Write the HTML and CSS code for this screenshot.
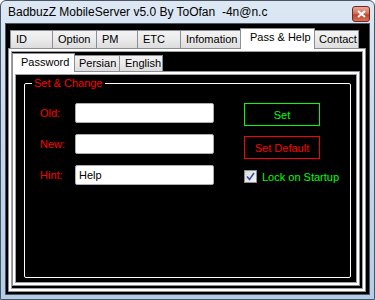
FILE: index.html
```html
<!DOCTYPE html>
<html lang="en">
<head>
    <meta charset="UTF-8">
    <title>BadbuzZ MobileServer v5.0</title>
    <link rel="stylesheet" href="styles.css">
</head>
<body>
    <div class="window">
        <div class="titlebar">
            <span class="title">BadbuzZ MobileServer v5.0 By ToOfan&nbsp; -4n@n.c</span>
            <div class="close-btn">
                <svg width="9" height="8" viewBox="0 0 9 8">
                    <path d="M1 1 L8 7 M8 1 L1 7" stroke="#fff" stroke-width="2"/>
                </svg>
            </div>
        </div>

        <div class="client">
            <div class="tabs outer-tabs">
                <div class="tab">ID</div>
                <div class="tab">Option</div>
                <div class="tab">PM</div>
                <div class="tab">ETC</div>
                <div class="tab">Infomation</div>
                <div class="tab active">Pass &amp; Help</div>
                <div class="tab">Contact</div>
            </div>

            <div class="panel outer-panel">
                <div class="tabs inner-tabs">
                    <div class="tab active">Password</div>
                    <div class="tab">Persian</div>
                    <div class="tab">English</div>
                </div>

                <div class="panel inner-panel">
                    <fieldset class="group">
                        <legend>Set &amp; Change</legend>
                        <div class="group-body">
                            <div class="fields">
                                <div class="field">
                                    <label>Old:</label>
                                    <div class="input"></div>
                                </div>
                                <div class="field">
                                    <label>New:</label>
                                    <div class="input"></div>
                                </div>
                                <div class="field">
                                    <label>Hint:</label>
                                    <div class="input">Help</div>
                                </div>
                            </div>

                            <div class="actions">
                                <div class="btn btn-green">Set</div>
                                <div class="btn btn-red">Set Default</div>
                                <div class="check">
                                    <span class="check-box">
                                        <svg width="9" height="9" viewBox="0 0 9 9">
                                            <path d="M1 4.5 L3.5 7.5 L8 1" stroke="#3c4fa0" stroke-width="1.6" fill="none"/>
                                        </svg>
                                    </span>
                                    <span>Lock on Startup</span>
                                </div>
                            </div>
                        </div>
                    </fieldset>
                </div>
            </div>
        </div>
    </div>
</body>
</html>
```

FILE: styles.css
```css
* {
    margin: 0;
    padding: 0;
    box-sizing: border-box;
}

body {
    width: 375px;
    height: 300px;
    overflow: hidden;
    font-family: "Liberation Sans", Arial, sans-serif;
    font-size: 11px;
    background: #ffffff;
}

.window {
    width: 375px;
    height: 300px;
    display: flex;
    flex-direction: column;
    border: 1px solid #4a5562;
    border-radius: 6px 6px 0 0;
    background: linear-gradient(180deg, #dde8f4 0%, #c8daee 40%, #b4cde8 100%);
    padding: 0 4px 4px 4px;
}

.titlebar {
    height: 22px;
    display: flex;
    align-items: center;
    justify-content: space-between;
    padding: 0 0 0 3px;
}

.title {
    font-family: "Liberation Sans", Arial, sans-serif;
    font-size: 12px;
    color: #000000;
}

.close-btn {
    width: 18px;
    height: 16px;
    margin-top: 3px;
    border: 1px solid #6e2a1c;
    border-radius: 3px;
    background: linear-gradient(180deg, #e8a898 0%, #d46a54 50%, #c0402a 55%, #d8705a 100%);
    display: flex;
    align-items: center;
    justify-content: center;
}

/* client area */
.client {
    flex: 1;
    background: #000000;
    border: 1px solid #4c5866;
    display: flex;
    flex-direction: column;
    padding: 3px 1px 2px 1px;
}

.tabs {
    display: grid;
    align-items: end;
    position: relative;
    z-index: 1;
}

.outer-tabs {
    grid-template-columns: 42px 44px 41px 43px 62px 71px 45px;
    margin-left: 3px;
    height: 21px;
}

.inner-tabs {
    grid-template-columns: 61px 46px 43px;
    height: 19px;
}

.tab {
    height: 18px;
    line-height: 17px;
    padding-left: 5px;
    color: #000000;
    background: linear-gradient(180deg, #f2f2f2 0%, #ebebeb 50%, #dcdcdc 100%);
    border: 1px solid #8c8e94;
    border-bottom: none;
    margin-right: -1px;
    white-space: nowrap;
}

.inner-tabs .tab {
    height: 16px;
    line-height: 15px;
}

.tab.active {
    height: 21px;
    line-height: 17px;
    background: #ffffff;
    margin-left: -2px;
    margin-right: -2px;
    padding-left: 9px;
    position: relative;
    z-index: 2;
    margin-bottom: -1px;
}

.inner-tabs .tab.active {
    height: 19px;
    line-height: 17px;
    padding-left: 8px;
    margin-left: 0;
}

.panel {
    border: 1px solid #8c8e94;
    box-shadow: inset 0 0 0 2px #ffffff, inset 0 0 0 3px #a0a0a0;
    background: #000000;
}

.outer-panel {
    flex: 1;
    margin: 0 2px 0 1px;
    padding: 3px 5px 5px 3px;
    display: flex;
    flex-direction: column;
}

.inner-panel {
    flex: 1;
    padding: 5px 8px 7px 11px;
    display: flex;
}

/* group box */
.group {
    flex: 1;
    border: 1px solid #ffffff;
    border-radius: 2px;
    padding: 0 0 0 15px;
}

.group legend {
    color: #ff0000;
    font-size: 11px;
    margin-left: -8px;
    padding: 0 2px;
}

.group-body {
    display: flex;
    padding-top: 14px;
}

.fields {
    display: flex;
    flex-direction: column;
    gap: 11px;
}

.field {
    display: flex;
    align-items: center;
    height: 20px;
}

.field label {
    width: 35px;
    color: #ff0000;
    font-size: 11px;
}

.input {
    width: 139px;
    height: 20px;
    background: #ffffff;
    border: 1px solid #abadb3;
    border-radius: 2px;
    padding: 2px 3px;
    font-size: 11px;
    line-height: 15px;
    color: #000000;
}

.actions {
    display: flex;
    flex-direction: column;
    margin-left: 30px;
    gap: 10px;
}

.btn {
    width: 76px;
    height: 23px;
    display: flex;
    align-items: center;
    justify-content: center;
    font-size: 11px;
    background: #000000;
}

.btn-green {
    border: 1px solid #00ff00;
    color: #00ff00;
}

.btn-red {
    border: 1px solid #ff0000;
    color: #ff0000;
}

.check {
    display: flex;
    align-items: center;
    gap: 5px;
    color: #00ff00;
    font-size: 11px;
    margin-top: 1px;
}

.check-box {
    width: 13px;
    height: 13px;
    border: 1px solid #8e8f8f;
    background: linear-gradient(135deg, #dcdcdc, #f4f4f4);
    display: flex;
    align-items: center;
    justify-content: center;
}
```
